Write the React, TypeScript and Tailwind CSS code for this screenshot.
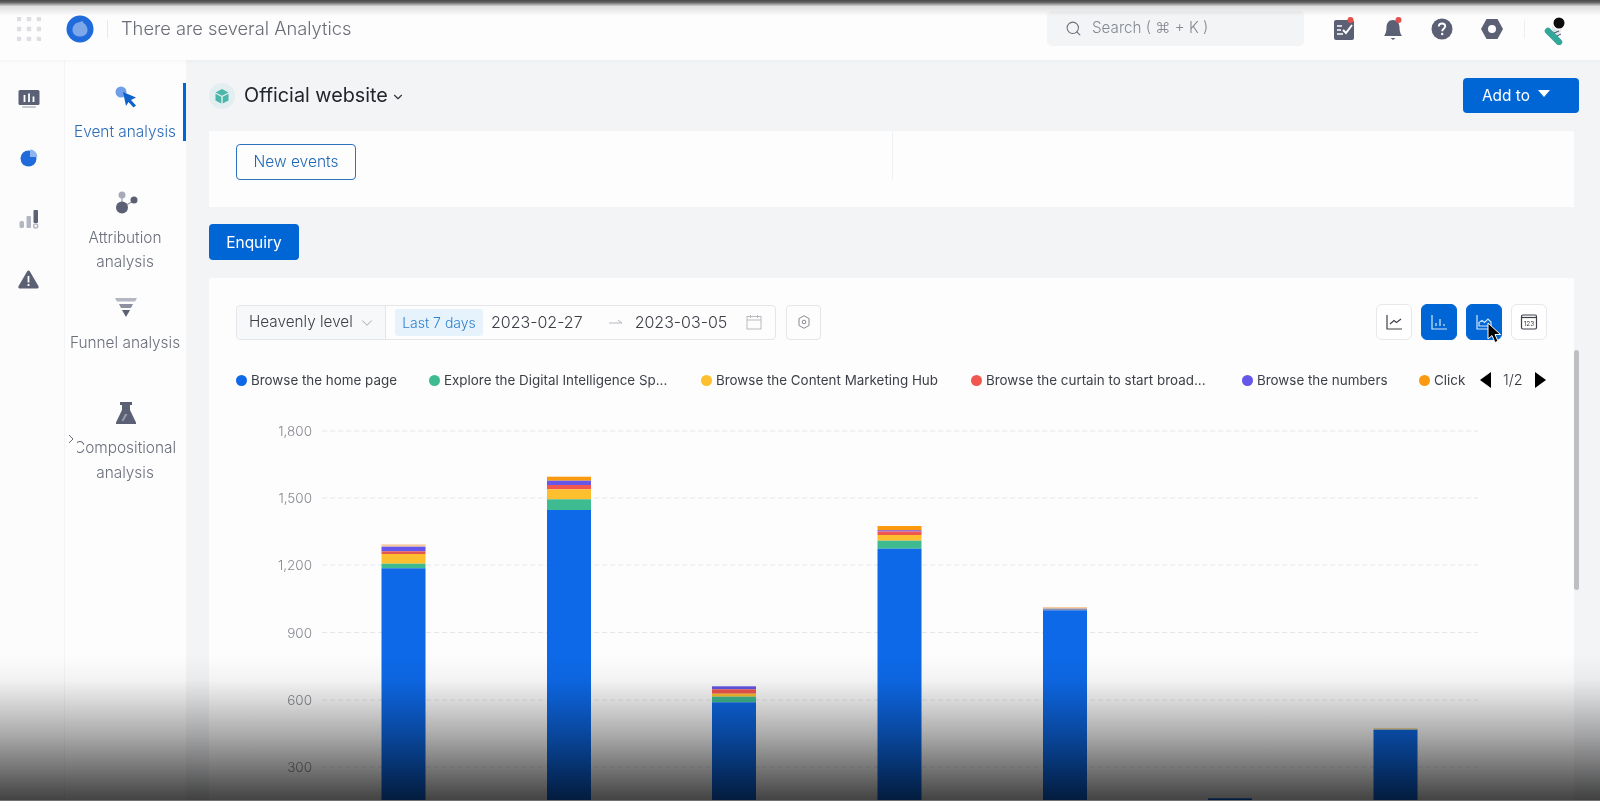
import { ChevronDown, Search } from "lucide-react";

const ICON_GREY = "#5b6074";

const legend = [
  { label: "Browse the home page", dot: "bg-[#0d69e8]", width: "w-[193px]" },
  { label: "Explore the Digital Intelligence Sp...", dot: "bg-[#3fbb91]", width: "w-[272px]" },
  { label: "Browse the Content Marketing Hub", dot: "bg-[#fdbf2d]", width: "w-[270px]" },
  { label: "Browse the curtain to start broad...", dot: "bg-[#f2574f]", width: "w-[271px]" },
  { label: "Browse the numbers", dot: "bg-[#6457ea]", width: "w-[177px]" },
  { label: "Click", dot: "bg-[#fb9a0e]", width: "w-[55px]" },
];

// [x, [top, bottom, colour]...], page pixels; the blue segment runs off the bottom
const bars: [number, [number, number, string][]][] = [
  [381.5, [[544.3, 546.7, "#f6c9a0"], [546.7, 551.3, "#6457ea"], [551.3, 554, "#e5574f"], [554, 563.7, "#fdbf2d"], [563.7, 568.3, "#3fbb91"], [568.3, 840, "#0d69e8"]]],
  [547, [[476.7, 480.7, "#fb9a0e"], [480.7, 485, "#6457ea"], [485, 489.3, "#f2574f"], [489.3, 499.3, "#fdbf2d"], [499.3, 510, "#3fbb91"], [510, 840, "#0d69e8"]]],
  [712, [[686.3, 689.3, "#6457ea"], [689.3, 693.7, "#f2574f"], [693.7, 696.7, "#fdbf2d"], [696.7, 702.3, "#3fbb91"], [702.3, 840, "#0d69e8"]]],
  [877.5, [[526, 530, "#fb9a0e"], [530, 531.7, "#a06fc8"], [531.7, 535, "#f2574f"], [535, 540.7, "#fdbf2d"], [540.7, 548.7, "#3fbb91"], [548.7, 840, "#0d69e8"]]],
  [1043, [[607, 608.5, "#f6c9a0"], [608.5, 610.3, "#8d8fa8"], [610.3, 840, "#0d69e8"]]],
  [1208, [[798.3, 840, "#0d69e8"]]],
  [1373.5, [[728, 729.7, "#f6dca0"], [729.7, 840, "#0d69e8"]]],
];

const ticks = [
  { y: 431, label: "1,800" },
  { y: 498, label: "1,500" },
  { y: 565, label: "1,200" },
  { y: 632.5, label: "900" },
  { y: 700, label: "600" },
  { y: 767, label: "300" },
];

function Chart() {
  return (
    <svg width="1338" height="440" viewBox="236 400 1338 440" className="mt-[10px] block">
      {ticks.map((t) => (
        <g key={t.label}>
          <line x1="322" x2="1478" y1={t.y} y2={t.y} stroke="#e4e7ec" strokeDasharray="5 3" />
          <text x="312" y={t.y + 5} textAnchor="end" fontSize="13.5" fill="#85888f" fontFamily="Inter, sans-serif" fontWeight="300">
            {t.label}
          </text>
        </g>
      ))}
      {bars.map(([x, segments]) => (
        <g key={x}>
          {segments.map(([top, bottom, fill]) => (
            <rect key={top} x={x} y={top} width="44" height={bottom - top} fill={fill} />
          ))}
        </g>
      ))}
    </svg>
  );
}

function TopIcons() {
  return (
    <div className="flex items-center">
      {/* tasks */}
      <svg width="24" height="26" viewBox="0 0 24 26" className="ml-[28px]">
        <rect x="2" y="4" width="20" height="20" rx="2" fill={ICON_GREY} />
        <path d="M5 10h5M5 14h4M5 18h6" stroke="#fff" strokeWidth="1.6" />
        <path d="M11 14l3 3 6-8" stroke="#fff" strokeWidth="2" fill="none" />
        <circle cx="18.5" cy="4" r="3" fill="#e0524d" />
      </svg>
      {/* bell */}
      <svg width="24" height="26" viewBox="0 0 24 26" className="ml-[25px]">
        <path d="M12 4c-4.5 0-6.500 3.500-6.500 7.500 0 4-1 6.500-2.500 8.500h18c-1.500-2-2.500-4.500-2.500-8.500C18.500 7.500 16.500 4 12 4z" fill={ICON_GREY} />
        <path d="M9.500 22h5l-2.500 2z" fill={ICON_GREY} />
        <circle cx="17.500" cy="4" r="3" fill="#e0524d" />
      </svg>
      {/* help */}
      <svg width="22" height="22" viewBox="0 0 22 22" className="ml-[26px]">
        <circle cx="11" cy="11" r="10.5" fill={ICON_GREY} />
        <path d="M7.800 8.500c0-2 1.500-3 3.200-3s3.200 1 3.200 2.800c0 2.400-3 2.400-3 4.900" stroke="#fff" strokeWidth="1.8" fill="none" />
        <circle cx="11.2" cy="16" r="1.2" fill="#fff" />
      </svg>
      {/* settings nut */}
      <svg width="24" height="22" viewBox="0 0 24 22" className="ml-[27px]">
        <path d="M6.500 1h11l5.500 10-5.500 10h-11L1 11z" fill={ICON_GREY} />
        <circle cx="12" cy="11" r="4" fill="#fff" />
      </svg>
      <div className="ml-[20px] h-[18px] w-px bg-[#eceef1]" />
      {/* avatar: astronaut on a skateboard */}
      <svg width="24" height="32" viewBox="0 0 24 32" className="ml-[17px]">
        <path d="M10 13l6-3 4 6-4 8-5-3z" fill="#dfe3e7" />
        <path d="M6 18l11 11" stroke="#33a79a" strokeWidth="6.500" strokeLinecap="round" />
        <circle cx="17" cy="10" r="7" fill="#fff" />
        <circle cx="17" cy="10" r="5.500" fill="#0d0d0d" />
        <path d="M12 20l5-2M15 23l4-2" stroke="#40505e" strokeWidth="1" />
      </svg>
    </div>
  );
}

function NavItem({ label, icon, active, className }: { label: string; icon: React.ReactNode; active?: boolean; className?: string }) {
  return (
    <div className={`relative flex flex-col items-center ${className ?? ""}`}>
      {active && <div className="absolute right-0 top-[-2px] h-[58px] w-[3px] bg-[#0066d6]" />}
      <div className="flex h-[24px] w-[24px] items-center justify-center">{icon}</div>
      <div className={`mt-[11px] pr-[1px] text-center text-[15.4px] font-light leading-[24.5px] ${active ? "text-[#2b6cb8]" : "text-[#6b6f7c]"}`}>
        {label}
      </div>
    </div>
  );
}

function ChartTypeButton({ active, children }: { active?: boolean; children: React.ReactNode }) {
  return (
    <div
      className={`flex h-[36px] w-[36px] items-center justify-center rounded-[6px] border ${
        active ? "border-[#0066d6] bg-[#0066d6]" : "border-[#e7e8eb] bg-white"
      }`}
    >
      {children}
    </div>
  );
}

export default function App() {
  return (
    <div className="relative flex h-[801px] w-[1600px] flex-col overflow-hidden bg-[#f3f4f6] font-['Inter',sans-serif] blur-[0.7px]">
      {/* ─── Top bar ─── */}
      <header className="z-10 flex h-[60px] shrink-0 items-center bg-[#fdfdfe] pb-[3px] pl-[17px] pr-[34px] shadow-[0_1px_4px_rgba(0,0,0,0.04)]">
        <svg width="24" height="24" viewBox="0 0 24 24" fill="#dcdee2">
          {[2, 12, 22].map((y) =>
            [2, 12, 22].map((x) => <rect key={`${x}-${y}`} x={x - 2.2} y={y - 2.2} width="4.4" height="4.4" rx="0.8" />),
          )}
        </svg>
        <svg width="28" height="28" viewBox="0 0 28 28" className="ml-[25px]">
          <circle cx="14" cy="14" r="13.5" fill="#1f6bdc" />
          <path d="M6.500 15c0-4 2.500-7 6-7.500l4-1.500 1 2c2.500 1.500 4 4 4 7 0 4-3 6.500-7.500 6.500s-7.500-2.500-7.500-6.500z" fill="#7ea7ea" />
        </svg>
        <div className="ml-[13px] h-[18px] w-px bg-[#e8e9ec]" />
        <div className="ml-[13px] text-[18.3px] font-light text-[#6a6d75]">There are several Analytics</div>
        <div className="ml-auto flex h-[35px] w-[257px] items-center rounded-[5px] bg-[#f3f4f6] pl-[18px] text-[15.2px] font-light text-[#858892]">
          <Search size={17} strokeWidth={1.5} className="text-[#6b6f7c]" />
          <span className="ml-[10px]">Search ( ⌘ + K )</span>
        </div>
        <TopIcons />
      </header>

      <div className="flex min-h-0 flex-1">
        {/* ─── Rail ─── */}
        <aside className="flex w-[65px] shrink-0 flex-col items-center border-r border-[#f3f4f6] bg-[#fcfcfd] pr-[7px] pt-[29px]">
          <svg width="22" height="20" viewBox="0 0 22 20">
            <rect x="0.5" y="1" width="21" height="15" rx="1.5" fill={ICON_GREY} />
            <path d="M6.500 6v7M11 4.500v8.500M15.500 7.500v5.500" stroke="#fff" strokeWidth="1.8" />
            <rect x="4" y="17" width="14" height="2" rx="1" fill="#c3c6ce" />
          </svg>
          <svg width="18" height="18" viewBox="0 0 18 18" className="mt-[40px]">
            <circle cx="8.5" cy="9.5" r="8" fill="#1f6bdc" />
            <path d="M10 0.500a7.500 7.500 0 0 1 7.500 7.500h-7.500z" fill="#8fb5ee" />
          </svg>
          <svg width="20" height="19" viewBox="0 0 20 19" className="mt-[43px]">
            <rect x="0.5" y="11" width="4.5" height="7" rx="1.5" fill="#b4b7c1" />
            <rect x="7.5" y="6" width="4.5" height="12" rx="1" fill="#b4b7c1" />
            <rect x="14.5" y="0" width="4.5" height="13" rx="1" fill={ICON_GREY} />
            <circle cx="16.7" cy="16" r="2" fill="none" stroke="#b4b7c1" strokeWidth="1.5" />
          </svg>
          <svg width="21" height="19" viewBox="0 0 21 19" className="mt-[41px]">
            <path d="M10.500 0.500c.6 0 1 .3 1.300.8l8.700 15c.5 1 0 2.200-1.200 2.200H1.700C.5 18.500 0 17.300.5 16.300l8.700-15c.3-.5.7-.8 1.300-.8z" fill={ICON_GREY} />
            <rect x="9.6" y="6" width="1.8" height="6.5" fill="#fff" />
            <rect x="9.6" y="14" width="1.8" height="2" fill="#fff" />
          </svg>
        </aside>

        {/* ─── Analysis types ─── */}
        <nav className="flex w-[121px] shrink-0 flex-col bg-[#fdfdfe] pt-[25px]">
          <NavItem
            active
            label="Event analysis"
            icon={
              <svg width="24" height="24" viewBox="0 0 24 24">
                <circle cx="7" cy="7" r="5.500" fill="#6f9fe8" />
                <path d="M9 7l13 5.500-5 2.500 5 5.500-2.500 2-5-5.500-2.500 4z" fill="#0f62c9" />
              </svg>
            }
          />
          <NavItem
            className="mt-[46px]"
            label="Attribution analysis"
            icon={
              <svg width="24" height="24" viewBox="0 0 24 24">
                <path d="M8 3v12M9 16l12-7" stroke="#9a9dab" strokeWidth="1.2" />
                <circle cx="8" cy="4" r="3.500" fill="#a8abb7" />
                <circle cx="8" cy="16.5" r="6" fill={ICON_GREY} />
                <circle cx="20" cy="9" r="3.500" fill={ICON_GREY} />
              </svg>
            }
          />
          <NavItem
            className="mt-[21px]"
            label="Funnel analysis"
            icon={
              <svg width="24" height="24" viewBox="0 0 24 24">
                <path d="M1 2h22l-2 3.500H3z" fill="#b4b7c1" />
                <path d="M5 8h14l-2 4H7z" fill="#8d90a0" />
                <path d="M8 14h8l-4 7z" fill={ICON_GREY} />
              </svg>
            }
          />
          <NavItem
            className="mt-[46px]"
            label="Compositional analysis"
            icon={
              <svg width="24" height="24" viewBox="0 0 24 24">
                <path d="M6 1h12v3h-2v5l6 12.500V23H2v-1.500L8 9V4H6z" fill={ICON_GREY} />
                <path d="M11 13h2.500l-4 7h-2z" fill="#9a9dab" />
              </svg>
            }
          />
        </nav>

        {/* ─── Main ─── */}
        <main className="flex min-w-0 flex-1 flex-col pl-[23px] pr-[21px]">
          <div className="flex h-[71px] shrink-0 items-center justify-between">
            <div className="flex items-center">
              <svg width="26" height="26" viewBox="0 0 26 26">
                <circle cx="13" cy="13" r="13" fill="#e2eef0" />
                <path d="M13 6l6.500 3.400L13 12.800 6.500 9.400z" fill="#4bb7ab" />
                <path d="M6.500 10.800l5.800 3v6.700l-5.800-3z" fill="#4bb7ab" />
                <path d="M19.500 10.800l-5.800 3v6.700l5.800-3z" fill="#4bb7ab" />
              </svg>
              <span className="ml-[9px] text-[19.8px] text-[#22252b]">Official website</span>
              <ChevronDown size={14} strokeWidth={2} className="ml-[3px] mt-[2px] text-[#33363d]" />
            </div>
            <div className="flex h-[35px] w-[116px] items-center rounded-[4px] bg-[#0066d6] pl-[19px] text-[15.4px] text-white">
              Add to
              <svg width="12" height="8" viewBox="0 0 12 8" className="mb-[3px] ml-[8px]">
                <path d="M0 0h12L6 7z" fill="#fff" />
              </svg>
            </div>
          </div>

          <section className="mr-[5px] flex h-[76px] shrink-0 bg-[#fdfdfd]">
            <div className="h-[49px] w-[684px] border-r border-[#f0f1f3] pl-[27px] pt-[13px]">
              <div className="flex h-[36px] w-[120px] items-center justify-center rounded-[4px] border border-[#2b73bd] text-[15.5px] font-light text-[#1f68b5]">
                New events
              </div>
            </div>
          </section>

          <div className="mt-[17px] flex h-[36px] w-[90px] shrink-0 items-center justify-center rounded-[4px] bg-[#0066d6] pt-px text-[15.5px] text-white">
            Enquiry
          </div>

          <section className="mr-[5px] mt-[18px] min-h-0 flex-1 bg-[#fdfdfd] pl-[27px] pt-[26px]">
            <div className="flex items-center justify-between pr-[27px]">
              <div className="flex items-center">
                <div className="flex h-[35px] w-[540px] items-center rounded-[4px] border border-[#e4e6e9] text-[16px] text-[#3d4048]">
                  <div className="flex h-full w-[149px] items-center rounded-l-[4px] border-r border-[#e4e6e9] bg-[#f7f8f9] pl-[12px] pt-px text-[15.3px] font-light">
                    Heavenly level
                    <ChevronDown size={18} strokeWidth={1} className="ml-[5px] text-[#8a8d96]" />
                  </div>
                  <div className="ml-[9px] flex h-[27px] w-[88px] items-center justify-center rounded-[3px] bg-[#e6f3fc] text-[14px] font-light text-[#2f7fcb]">
                    Last 7 days
                  </div>
                  <span className="ml-[8px] font-light">2023-02-27</span>
                  <svg width="16" height="8" viewBox="0 0 16 8" className="ml-[25px]">
                    <path d="M1 5h13l-4-3" stroke="#b6b8be" fill="none" />
                  </svg>
                  <span className="ml-[11px] font-light">2023-03-05</span>
                  <svg width="16" height="16" viewBox="0 0 16 16" className="ml-[19px]" fill="none" stroke="#b9bbc1">
                    <rect x="1" y="2.5" width="14" height="12.5" />
                    <path d="M1 6h14M4.500 1v3M11.500 1v3" />
                  </svg>
                </div>
                <div className="ml-[10px] flex h-[35px] w-[35px] items-center justify-center rounded-[4px] border border-[#e4e6e9]">
                  <svg width="12" height="14" viewBox="0 0 12 14" fill="none" stroke="#85888f">
                    <path d="M6 .7l5 2.900v6.800l-5 2.900-5-2.900V3.600z" />
                    <circle cx="6" cy="7" r="1.8" />
                  </svg>
                </div>
              </div>
              <div className="flex items-center gap-[9px]">
                <ChartTypeButton>
                  <svg width="18" height="18" viewBox="0 0 18 18" fill="none" stroke="#3d4048" strokeWidth="1.2">
                    <path d="M2 2v14h15M5 11l4-3.500 2.500 2L16 6" />
                  </svg>
                </ChartTypeButton>
                <ChartTypeButton active>
                  <svg width="18" height="18" viewBox="0 0 18 18" fill="none" stroke="#d5e6fa" strokeWidth="1.2">
                    <path d="M2 2v14h15M6 13v-3M10 13V6M14 13v-2" />
                  </svg>
                </ChartTypeButton>
                <ChartTypeButton active>
                  <svg width="18" height="18" viewBox="0 0 18 18" fill="none" stroke="#d5e6fa" strokeWidth="1.2">
                    <path d="M2 2v14h15" />
                    <path d="M4 13V9.500l3-2 2.500 2L13 6l3 3v4z" />
                  </svg>
                </ChartTypeButton>
                <ChartTypeButton>
                  <svg width="18" height="18" viewBox="0 0 18 18" fill="none" stroke="#3d4048">
                    <rect x="1.500" y="2" width="15" height="14" rx="1.5" strokeWidth="1.2" />
                    <path d="M1.500 4.500h15" strokeWidth="1.2" />
                    <text x="9" y="12.500" textAnchor="middle" fontSize="6.5" fill="#3d4048" stroke="none" fontFamily="Inter, sans-serif">
                      123
                    </text>
                  </svg>
                </ChartTypeButton>
              </div>
            </div>

            <div className="mt-[30px] flex h-[20px] items-center">
              {legend.map((item) => (
                <div key={item.label} className={`flex items-center ${item.width}`}>
                  <span className={`h-[11px] w-[11px] rounded-full ${item.dot}`} />
                  <span className="ml-[4px] whitespace-nowrap text-[13.4px] text-[#3d4048]">{item.label}</span>
                </div>
              ))}
              <svg width="12" height="16" viewBox="0 0 12 16" className="ml-[6px]">
                <path d="M11 0v16L0 8z" fill="#000" />
              </svg>
              <span className="ml-[11px] text-[14.5px] font-light text-[#33363d]">1/2</span>
              <svg width="12" height="16" viewBox="0 0 12 16" className="ml-[11px]">
                <path d="M1 0v16l11-8z" fill="#000" />
              </svg>
            </div>

            <Chart />
          </section>
        </main>

        {/* scrollbar thumb */}
        <div className="absolute left-[1574px] top-[350px] h-[240px] w-[5px] rounded-full bg-[#bdbfc3]" />
      </div>

      {/* sidebar collapse handle */}
      <div className="absolute left-[65px] top-[412px] flex h-[54px] w-[12px] items-center justify-center rounded-r-[6px] bg-[#fdfdfe] pr-[1px]">
        <svg width="6" height="10" viewBox="0 0 6 10" fill="none" stroke="#6b6f7c">
          <path d="M1 1l4 4-4 4" />
        </svg>
      </div>

      {/* mouse pointer */}
      <svg width="16" height="22" viewBox="0 0 16 22" className="absolute left-[1487px] top-[322px]">
        <path d="M1 1v16l4-3.500 3 7 3-1.300-3-6.700h5.500z" fill="#000" stroke="#fff" />
      </svg>

      {/* video vignette, top and bottom */}
      <div className="pointer-events-none absolute inset-x-0 top-0 z-20 h-[16px] bg-[linear-gradient(to_bottom,rgba(0,0,0,0.72)_0%,rgba(0,0,0,0.6)_15%,rgba(0,0,0,0.12)_40%,rgba(0,0,0,0)_100%)]" />
      <div className="pointer-events-none absolute inset-x-0 bottom-0 z-20 h-[146px] bg-[linear-gradient(to_bottom,rgba(0,0,0,0)_0%,rgba(0,0,0,0.04)_17%,rgba(0,0,0,0.14)_31%,rgba(0,0,0,0.33)_55%,rgba(0,0,0,0.53)_77%,rgba(0,0,0,0.67)_92%,rgba(0,0,0,0.74)_100%)]" />
      <div className="pointer-events-none absolute inset-x-0 bottom-0 z-20 h-px bg-[#707070]" />
    </div>
  );
}
